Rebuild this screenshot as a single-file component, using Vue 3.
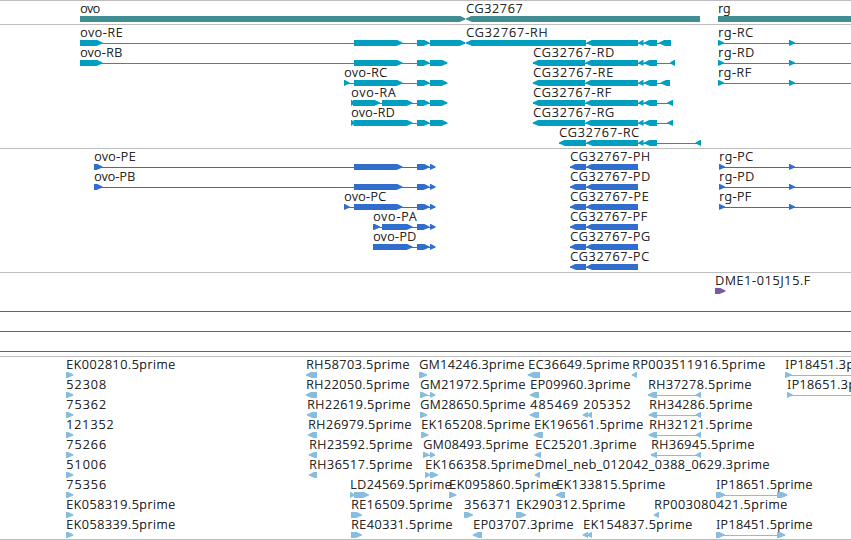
<template>
  <div class="browser">
    <section
      v-for="track in tracks"
      :key="track.name"
      class="track"
      :class="[track.name, { span: !track.features.length }]"
      :style="{ height: track.height + 'px' }"
    >
      <svg v-if="track.features.length" width="851" :height="track.height - 1">
        <g
          v-for="(f, i) in track.features"
          :key="i"
          :transform="`translate(0 ${f.row * 20})`"
        >
          <rect v-if="f.line" class="intron" :x="f.line[0]" y="18" :width="f.line[1] - f.line[0]" height="1" />
          <polygon v-for="(e, j) in f.exons" :key="j" :points="shape(e, f.dir)" />
          <text :x="f.x + 0.3" y="12" :textLength="f.end - f.x + 0.3">{{ f.label }}</text>
        </g>
      </svg>
    </section>
  </div>
</template>

<script setup>
// label, row, text start, text end, direction (1, -1 or 0), exons, optional intron line
function feature(label, row, x, end, dir, exons, line) {
  return { label, row, x, end, dir, exons, line }
}

// exon body with a tapered head on the side it is read towards
function shape([a, b], dir) {
  const h = Math.min(6, b - a)
  if (dir > 0 && b < 851) {
    return `${a},15 ${b - h + 0.8},15 ${b},17.6 ${b},18.6 ${b - h},21 ${a},21`
  }
  if (dir < 0) {
    return `${b},15 ${a + h - 0.8},15 ${a},17.6 ${a},18.6 ${a + h},21 ${b},21`
  }
  return `${a},15 ${b},15 ${b},21 ${a},21`
}

const genes = [
  feature('ovo', 0, 80, 99.5, 1, [[80, 465.5]]),
  feature('CG32767', 0, 466, 522, -1, [[466, 700]]),
  feature('rg', 0, 718, 730, 1, [[718, 851]]),
]

const head = [[354, 402.5], [417, 429.5]]
const tail = [[638.3, 643.5], [644, 657]]
const transcripts = [
  feature('ovo-RE', 0, 80, 122, 1, [[80, 102.5], ...head, [430, 465.5]], [80, 465]),
  feature('ovo-RB', 1, 80, 121.5, 1, [[80, 102.5], ...head, [430, 447.5]], [80, 447]),
  feature('ovo-RC', 2, 344, 386.5, 1, [[344, 349.7], ...head, [430, 447.5]], [344, 447]),
  feature('ovo-RA', 3, 351, 395, 1, [[351, 354.5], [353, 380], [382, 412.5], head[1], [430, 447.5]], [351, 447]),
  feature('ovo-RD', 4, 351, 394, 1, [[351, 354.5], [353.5, 412.5], head[1], [430, 447.5]], [351, 447]),
  feature('CG32767-RH', 0, 466, 547, -1, [[466, 586], [586.5, 638], ...tail, [659, 671]], [466, 671]),
  feature('CG32767-RD', 1, 533, 613.5, -1, [[532.8, 585], [585.5, 638], ...tail, [670, 675]], [533, 675]),
  feature('CG32767-RE', 2, 533, 612.5, -1, [[532.8, 585], [585.5, 638], ...tail, [660.7, 670]], [533, 670]),
  feature('CG32767-RF', 3, 533, 610.5, -1, [[532.8, 585], [585.5, 638], ...tail, [667.3, 673]], [533, 673]),
  feature('CG32767-RG', 4, 533, 613.5, -1, [[532.8, 585], [585.5, 638], ...tail, [667.3, 673]], [533, 673]),
  feature('CG32767-RC', 5, 559, 638.5, -1, [[559, 586], [586.5, 638], ...tail, [695.5, 701]], [559, 701]),
  ...['rg-RC', 'rg-RD', 'rg-RF'].map((name, i) =>
    feature(name, i, 718, [752.5, 753.5, 750.5][i], 1, [[718, 724], [789, 795]], [718, 851])),
]

const proteins = [
  feature('ovo-PE', 0, 94, 135, 1, [[94, 102.5], ...head, [430, 435.5]], [94, 435]),
  feature('ovo-PB', 1, 94, 134.5, 1, [[94, 102.5], ...head, [430, 435.5]], [94, 435]),
  feature('ovo-PC', 2, 344, 385.5, 1, [[344, 349.7], ...head, [430, 435.5]], [344, 435]),
  feature('ovo-PA', 3, 373, 416, 1, [[373, 380], [382, 412.5], head[1], [430, 435.5]], [373, 435]),
  feature('ovo-PD', 4, 373, 415.5, 1, [[373, 412.5], head[1], [430, 435.5]], [373, 435]),
  ...['H', 'D', 'E', 'F', 'G', 'C'].map((c, i) =>
    feature('CG32767-P' + c, i, 570, [649.5, 649.5, 648, 646.5, 649.5, 648.5][i], -1, [[570, 586], [586.3, 638]], [570, 638])),
  ...['rg-PC', 'rg-PD', 'rg-PF'].map((name, i) =>
    feature(name, i, 719, [752.5, 753.5, 750.5][i], 1, [[719, 725], [789, 795]], [719, 851])),
]

const clones = [
  feature('DME1-015J15.F', 0, 715, 809.5, 1, [[715, 725.5]]),
]

const ests = [
  ...['EK002810.5prime', '52308', '75362', '121352', '75266', '51006', '75356', 'EK058319.5prime', 'EK058339.5prime'].map((name, i) =>
    feature(name, i, 66, { 5: 105.5, 6: 113, 15: 174.5 }[name.length], 1, [[66, 73.5]])),

  feature('RH58703.5prime', 0, 306, 408.7, -1, [[305.7, 317]]),
  feature('RH22050.5prime', 1, 306, 408.7, -1, [[305.7, 317]]),
  feature('RH22619.5prime', 2, 307, 409.7, -1, [[306.7, 317]]),
  feature('RH26979.5prime', 3, 308, 410.7, -1, [[307.7, 317]]),
  feature('RH23592.5prime', 4, 309, 411.7, -1, [[308.7, 317]]),
  feature('RH36517.5prime', 5, 309, 411.7, -1, [[308.7, 317]]),
  feature('LD24569.5prime', 6, 350, 451, 1, [[350, 355], [354, 369]]),
  feature('RE16509.5prime', 7, 351, 451.7, 1, [[351, 362]]),
  feature('RE40331.5prime', 8, 351, 451.7, 1, [[351, 362]]),

  feature('GM14246.3prime', 0, 419, 523.7, 1, [[419, 427]]),
  feature('GM21972.5prime', 1, 420, 524.7, 1, [[420, 427.5], [430, 435.3]], [420, 435]),
  feature('GM28650.5prime', 2, 420, 524.7, 1, [[420, 427.3]]),
  feature('EK165208.5prime', 3, 421, 529.5, 1, [[421, 428.5]]),
  feature('GM08493.5prime', 4, 423, 527.7, 1, [[423, 429.5], [430, 435.3]], [423, 435]),
  feature('EK166358.5prime', 5, 425, 533.5, 1, [[425, 430.5], [430, 438]]),
  feature('EK095860.5prime', 6, 449, 557.5, 1, [[449, 456.5]]),
  feature('356371', 7, 464, 511, 1, [[464, 473]]),
  feature('EP03707.3prime', 8, 473, 572.7, -1, [[472.7, 482]]),

  feature('EC36649.5prime', 0, 528, 628.7, -1, [[527.7, 540]]),
  feature('EP09960.3prime', 1, 530, 629.7, -1, [[529.7, 539]]),
  feature('485469', 2, 530, 577.5, -1, [[529.7, 539]]),
  feature('205352', 2, 583, 630, -1, [[582.7, 588], [587, 592]]),
  feature('EK196561.5prime', 3, 534, 642.5, -1, [[533.7, 543]]),
  feature('EC25201.3prime', 4, 535, 635.7, -1, [[534.7, 541]]),
  feature('Dmel_neb_012042_0388_0629.3prime', 5, 535, 768.7, -1, [[534.7, 540]]),
  feature('EK133815.5prime', 6, 556, 664.5, -1, [[555.7, 565]]),
  feature('EK290312.5prime', 7, 516, 624.5, 1, [[516, 526]]),
  feature('EK154837.5prime', 8, 583, 691.5, -1, [[582.7, 588], [587, 592]]),

  feature('RP003511916.5prime', 0, 632, 764.5, -1, [[631.7, 637]]),
  feature('RH37278.5prime', 1, 648, 750.7, -1, [[647.7, 657], [695.5, 701]], [648, 701]),
  feature('RH34286.5prime', 2, 649, 751.7, -1, [[648.7, 657], [695.5, 701]], [649, 701]),
  feature('RH32121.5prime', 3, 649, 751.7, -1, [[648.7, 657], [695.5, 701]], [649, 701]),
  feature('RH36945.5prime', 4, 651, 753.7, -1, [[650.7, 657], [695.5, 701]], [651, 701]),
  feature('RP003080421.5prime', 7, 654, 786.5, -1, [[653.7, 659]]),

  feature('IP18451.3prime', 0, 785, 881, 1, [[785, 791.7]], [785, 851]),
  feature('IP18651.3prime', 1, 787, 883, 1, [[787, 792.7]], [787, 851]),
  feature('IP18651.5prime', 6, 716, 811.7, 1, [[716, 725.3], [777, 787.5]], [716, 787]),
  feature('IP18451.5prime', 8, 716, 811.7, 1, [[716, 724.7], [777, 785.3]], [716, 785]),
]

const tracks = [
  { name: 'genes', height: 24, features: genes },
  { name: 'transcripts', height: 124, features: transcripts },
  { name: 'proteins', height: 124, features: proteins },
  { name: 'clones', height: 39, features: clones },
  { name: 'span-a', height: 20, features: [] },
  { name: 'span-b', height: 20, features: [] },
  { name: 'span-c', height: 5, features: [] },
  { name: 'ests', height: 184, features: ests },
]
</script>

<style>
body { margin: 0; background: #fff; }
</style>

<style scoped>
.browser {
  width: 851px; height: 540px; overflow: hidden;
  display: flex; flex-direction: column;
  box-sizing: border-box; border-bottom: 1px solid #bebebe;
  background: #fff;
}
.track { flex: none; box-sizing: border-box; border-top: 1px solid #bebebe; }
.track.span { border-top-color: #6a579d; }
.track svg { display: block; overflow: hidden; }
.intron { shape-rendering: crispEdges; }
text { font: 300 12.5px "Noto Sans", sans-serif; fill: #000; stroke: #000; stroke-width: 0.2px; }
.genes { fill: #408e93; }
.transcripts { fill: #009fc0; }
.proteins { fill: #306dcc; }
.clones { fill: #7759a6; }
.ests { fill: #88bddf; }
</style>
